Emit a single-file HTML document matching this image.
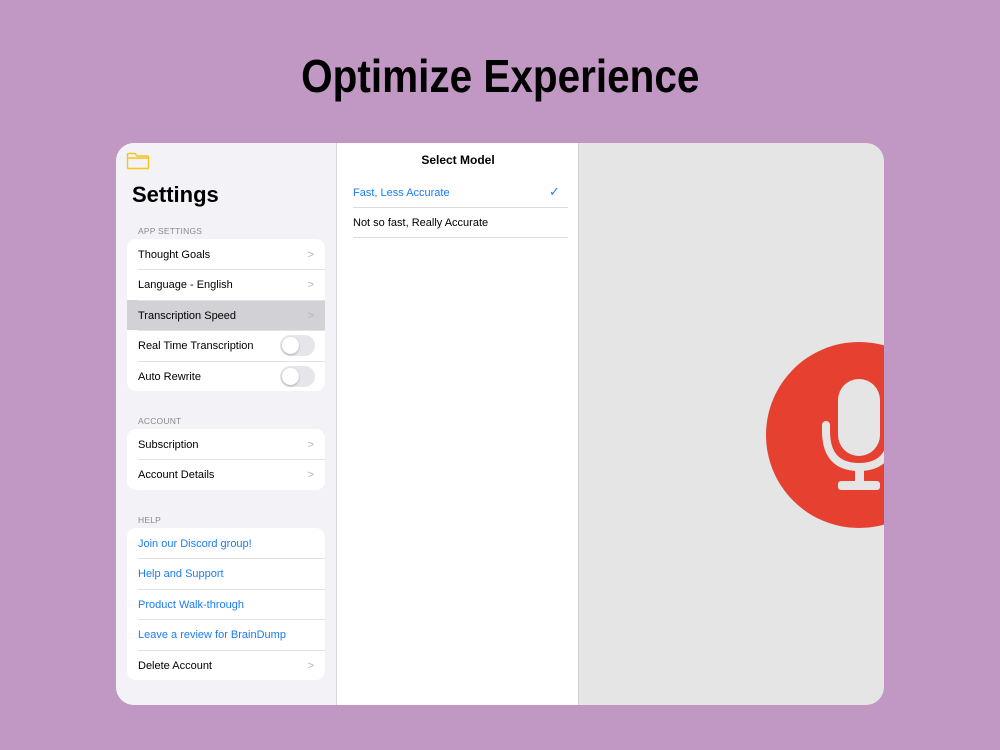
<!DOCTYPE html>
<html><head><style>
*{margin:0;padding:0;box-sizing:border-box}
body{width:1000px;height:750px;background:#c197c3;font-family:"Liberation Sans",sans-serif;position:relative;overflow:hidden}
.title{position:absolute;top:49px;left:0;width:1000px;text-align:center}
.title span{display:inline-block;font-size:46px;font-weight:bold;color:#000;transform:scaleX(0.88);white-space:nowrap}
.panel{position:absolute;left:116px;top:143px;width:768px;height:562px;border-radius:18px;overflow:hidden;background:#e5e5e5}
.side{position:absolute;left:0;top:0;width:221px;height:562px;background:#f2f2f7;border-right:1px solid #d8d8dc}
.mid{position:absolute;left:221px;top:0;width:242px;height:562px;background:#fff;border-right:1px solid #d0d0d0}
.a{position:absolute}
.grp{position:absolute;left:11px;width:198px;background:#fff;border-radius:9px;overflow:hidden}
.row{height:30.4px;position:relative;font-size:11px;color:#000;line-height:32px;padding-left:11px}
.row+.row:before{content:"";position:absolute;left:11px;right:0;top:0;border-top:1px solid #e2e2e6}
.row.blue{color:#1a7cf5}
.row.sel{background:#d1d1d6}
.chev{position:absolute;right:11px;top:0;color:#b4b4b9;font-size:11px}
.tog{position:absolute;right:10px;top:5px;width:35px;height:21px;border-radius:11px;background:#e6e6ea}
.tog:after{content:"";position:absolute;left:2px;top:2px;width:17px;height:17px;border-radius:50%;background:#fff;box-shadow:0 1px 2px rgba(0,0,0,.25)}
.hdr{position:absolute;left:22px;font-size:8.5px;color:#8a8a8e;letter-spacing:.2px}
</style></head><body>
<div class="title"><span>Optimize Experience</span></div>
<div class="panel">
 <div class="side">
  <svg class="a" style="left:10px;top:9px" width="24" height="18" viewBox="0 0 24 18"><path d="M1.5 3 V15.5 Q1.5 16.5 2.5 16.5 H21.5 Q22.5 16.5 22.5 15.5 V5 Q22.5 4 21.5 4 H11 L9 1.5 H2.5 Q1.5 1.5 1.5 2.5 Z M1.5 6 H22.5" fill="none" stroke="#f5c518" stroke-width="1.4"/></svg>
  <div class="a" style="left:16px;top:39px;font-size:22px;font-weight:bold">Settings</div>
  <div class="hdr" style="top:83px">APP SETTINGS</div>
  <div class="grp" style="top:96px">
   <div class="row">Thought Goals<span class="chev">&gt;</span></div>
   <div class="row">Language - English<span class="chev">&gt;</span></div>
   <div class="row sel">Transcription Speed<span class="chev">&gt;</span></div>
   <div class="row">Real Time Transcription<span class="tog"></span></div>
   <div class="row">Auto Rewrite<span class="tog"></span></div>
  </div>
  <div class="hdr" style="top:273px">ACCOUNT</div>
  <div class="grp" style="top:286px">
   <div class="row">Subscription<span class="chev">&gt;</span></div>
   <div class="row">Account Details<span class="chev">&gt;</span></div>
  </div>
  <div class="hdr" style="top:372px">HELP</div>
  <div class="grp" style="top:385px">
   <div class="row blue">Join our Discord group!</div>
   <div class="row blue">Help and Support</div>
   <div class="row blue">Product Walk-through</div>
   <div class="row blue">Leave a review for BrainDump</div>
   <div class="row">Delete Account<span class="chev">&gt;</span></div>
  </div>
 </div>
 <div class="mid">
  <div class="a" style="left:0;width:242px;top:10px;text-align:center;font-size:12px;font-weight:bold">Select Model</div>
  <div class="a" style="left:16px;top:44px;font-size:11px;color:#1a7cf5">Fast, Less Accurate</div>
  <div class="a" style="left:212px;top:41px;font-size:13px;color:#1a7cf5">&#10003;</div>
  <div class="a" style="left:16px;top:64px;width:215px;border-top:1px solid #dcdcdc"></div>
  <div class="a" style="left:16px;top:74px;font-size:11px;color:#000">Not so fast, Really Accurate</div>
  <div class="a" style="left:16px;top:94px;width:215px;border-top:1px solid #dcdcdc"></div>
 </div>
 <svg class="a" style="left:0;top:0" width="768" height="562">
  <circle cx="743" cy="292" r="93" fill="#e64030"/>
  <rect x="722" y="236" width="42" height="77" rx="21" fill="#e5e5e5"/>
  <path d="M710 282 V288 Q710 324 743 324 Q776 324 776 288" fill="none" stroke="#e5e5e5" stroke-width="8" stroke-linecap="round"/>
  <rect x="739" y="322" width="9" height="20" fill="#e5e5e5"/>
  <rect x="722" y="338" width="42" height="9" rx="3" fill="#e5e5e5"/>
 </svg>
</div>
</body></html>
